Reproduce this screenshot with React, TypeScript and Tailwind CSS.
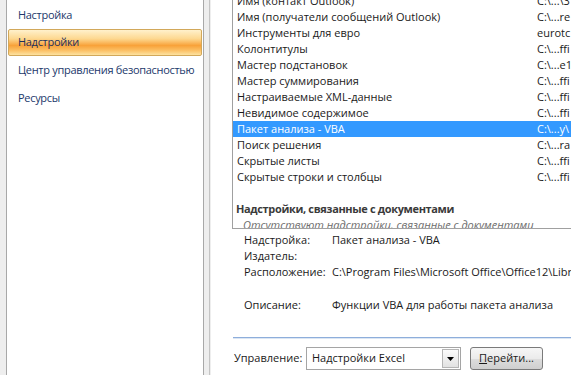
import React from "react";

const rows: [string, string][] = [
  ["Имя (контакт Outlook)", "C:\\...\\3"],
  ["Имя (получатели сообщений Outlook)", "C:\\...re"],
  ["Инструменты для евро", "eurotc"],
  ["Колонтитулы", "C:\\...ffi"],
  ["Мастер подстановок", "C:\\...e1"],
  ["Мастер суммирования", "C:\\...ffi"],
  ["Настраиваемые XML-данные", "C:\\...ffi"],
  ["Невидимое содержимое", "C:\\...ffi"],
  ["Пакет анализа - VBA", "C:\\...y\\"],
  ["Поиск решения", "C:\\...ra"],
  ["Скрытые листы", "C:\\...ffi"],
  ["Скрытые строки и столбцы", "C:\\...ffi"],
];

export default function App() {
  return (
    <div
      className="flex h-[375px] w-[571px] overflow-hidden bg-white text-[11px] text-[#1a1a1a]"
      style={{ fontFamily: '"Open Sans", "Noto Sans", sans-serif' }}
    >
      {/* Left navigation */}
      <div className="flex h-full w-[211px] shrink-0 bg-[#eeeeee]">
        <div className="ml-[6px] h-full w-[198px] overflow-hidden whitespace-nowrap border-x border-[#a8a8a8] bg-white pt-[2px] tracking-[-0.3px]">
          <div className="flex h-[27px] items-center pl-[11px] text-[#22386b]">Настройка</div>
          <div className="mx-[1px] flex h-[27px] items-center rounded-[2px] border border-[#d2a85a] bg-[linear-gradient(to_bottom,#fff1cc_0%,#fdd890_35%,#f8a23a_62%,#fbbd60_80%,#fde2a0_100%)] pl-[9px] text-[#1c2f5c]">
            Надстройки
          </div>
          <div className="flex h-[28px] items-center pl-[11px] text-[#22386b]">
            Центр управления безопасностью
          </div>
          <div className="flex h-[28px] items-center pl-[11px] text-[#22386b]">Ресурсы</div>
        </div>
        <div className="h-full w-[6px] border-r border-[#c4c4c4]" />
      </div>

      {/* Right area */}
      <div className="flex min-w-0 flex-1 flex-col pl-[21px]">
        {/* List box */}
        <div className="h-[229px] shrink-0 overflow-hidden border-b border-l border-[#a0a0a0]">
          <div className="-mt-[7px]">
            {rows.map(([a, b]) => {
              const sel = a === "Пакет анализа - VBA";
              return (
                <div
                  key={a}
                  className={`flex h-[16px] items-center whitespace-nowrap pl-[4px] ${
                    sel ? "bg-[#3399ff] text-white" : ""
                  }`}
                >
                  <div className="w-[300px] shrink-0">{a}</div>
                  <div>{b}</div>
                </div>
              );
            })}
            <div className="h-[16px]" />
            <div className="flex h-[16px] items-center whitespace-nowrap pl-[3px] font-bold tracking-[-0.35px] text-[#3a3a3a]">
              Надстройки, связанные с документами
            </div>
            <div className="flex h-[16px] items-center whitespace-nowrap pl-[10px] italic text-[#6d6d6d]">
              Отсутствуют надстройки, связанные с документами
            </div>
          </div>
        </div>

        {/* Details */}
        <div className="mt-[3px] pl-[12px] whitespace-nowrap">
          <div className="flex h-[16px] items-center">
            <div className="w-[88px] shrink-0">Надстройка:</div>
            <div>Пакет анализа - VBA</div>
          </div>
          <div className="flex h-[16px] items-center">
            <div className="w-[88px] shrink-0">Издатель:</div>
          </div>
          <div className="flex h-[16px] items-center">
            <div className="w-[88px] shrink-0">Расположение:</div>
            <div>C:\Program Files\Microsoft Office\Office12\Library\Analysis\ATPVBAEN.XLAM</div>
          </div>
          <div className="mt-[17px] flex h-[16px] items-center">
            <div className="w-[88px] shrink-0">Описание:</div>
            <div>Функции VBA для работы пакета анализа</div>
          </div>
        </div>

        {/* Separator */}
        <div className="ml-[1px] mt-[24px] h-[2px] border-t border-[#8eaedb] bg-[#dbe6f4]" />

        {/* Bottom controls */}
        <div className="mt-[8px] flex items-center whitespace-nowrap">
          <div className="w-[74px] shrink-0 pl-[2px]">Управление:</div>
          <div className="flex h-[23px] w-[155px] items-center border border-[#a5a5a5] bg-white">
            <div className="flex-1 pl-[5px]">Надстройки Excel</div>
            <div className="mr-[1px] flex h-[19px] w-[17px] items-center justify-center border border-[#b5b5b5] bg-[linear-gradient(to_bottom,#fbfbfb,#e2e2e2)]">
              <svg width="7" height="4" viewBox="0 0 7 4">
                <path d="M0 0H7L3.5 4Z" fill="#000" />
              </svg>
            </div>
          </div>
          <div className="ml-[9px] flex h-[23px] w-[73px] items-center justify-center rounded-[3px] border border-[#7a7a7a] bg-[linear-gradient(to_bottom,#f6f6f6_0%,#ebebeb_50%,#dddddd_51%,#cfcfcf_100%)]">
            <span>
              <span className="underline">П</span>ерейти...
            </span>
          </div>
        </div>
      </div>
    </div>
  );
}
